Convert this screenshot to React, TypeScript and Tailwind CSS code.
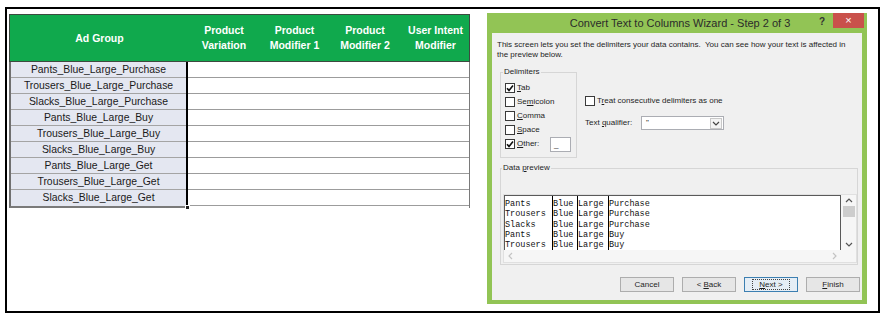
import React from 'react';

const adGroups = [
  'Pants_Blue_Large_Purchase',
  'Trousers_Blue_Large_Purchase',
  'Slacks_Blue_Large_Purchase',
  'Pants_Blue_Large_Buy',
  'Trousers_Blue_Large_Buy',
  'Slacks_Blue_Large_Buy',
  'Pants_Blue_Large_Get',
  'Trousers_Blue_Large_Get',
  'Slacks_Blue_Large_Get',
];

const headers = ['Ad Group', 'Product\nVariation', 'Product\nModifier 1', 'Product\nModifier 2', 'User Intent\nModifier'];

const preview = [
  ['Pants', 'Blue', 'Large', 'Purchase'],
  ['Trousers', 'Blue', 'Large', 'Purchase'],
  ['Slacks', 'Blue', 'Large', 'Purchase'],
  ['Pants', 'Blue', 'Large', 'Buy'],
  ['Trousers', 'Blue', 'Large', 'Buy'],
];

const Check: React.FC<{ checked?: boolean }> = ({ checked }) => (
  <span className="w-[10px] h-[10px] border border-[#3a3a3a] bg-white flex items-center justify-center shrink-0">
    {checked && (
      <svg width="8" height="8" viewBox="0 0 8 8">
        <path d="M1 4.2 L3 6.4 L7 1.4" fill="none" stroke="#111" strokeWidth="1.6" />
      </svg>
    )}
  </span>
);

const Chevron: React.FC<{ dir: 'up' | 'down' | 'left' | 'right'; color?: string }> = ({ dir, color = '#555' }) => {
  const d = {
    up: 'M1 5 L4 2 L7 5',
    down: 'M1 3 L4 6 L7 3',
    left: 'M5 1 L2 4 L5 7',
    right: 'M3 1 L6 4 L3 7',
  }[dir];
  return (
    <svg width="8" height="8" viewBox="0 0 8 8">
      <path d={d} fill="none" stroke={color} strokeWidth="1.2" />
    </svg>
  );
};

const SheetTable = () => (
  <div className="w-[461px] ml-[2px] mt-[5px] font-['Liberation_Sans',Arial,sans-serif]">
    <div className="grid grid-cols-[179px_70px_71px_70px_71px] h-[48px] bg-[#10a94d] border border-[#3d4a40] text-white font-bold text-[10.5px] leading-[15px]">
      {headers.map((h) => (
        <div key={h} className="flex items-center justify-center text-center whitespace-pre-line">
          {h}
        </div>
      ))}
    </div>
    <div className="flex">
      <div className="relative w-[179px] border-l-2 border-l-[#707070] border-r-2 border-r-black border-b-2 border-b-[#7a7a7a]">
        {adGroups.map((g, i) => (
          <div
            key={g}
            className={`h-[16px] bg-[#e4e7f1] flex items-center justify-center text-[10.4px] text-[#1a1a1a] ${i < adGroups.length - 1 ? 'border-b border-[#a4a4a4]' : ''}`}
          >
            {g}
          </div>
        ))}
        <div className="absolute -right-[4px] -bottom-[4px] w-[5px] h-[5px] bg-[#222] border border-white" />
      </div>
      <div className="flex-1 border-r border-[#7a7a7a]">
        {adGroups.map((g) => (
          <div key={g} className="h-[16px] border-b border-[#9c9c9c]" />
        ))}
      </div>
    </div>
  </div>
);

const WizardDialog = () => (
  <div className="ml-[17px] mt-[4px] w-[380px] h-[291px] bg-[#92c455] flex flex-col px-[5px] pb-[4px] font-['Liberation_Sans',Arial,sans-serif] text-[#1e1e1e]">
    <div className="relative h-[20px] shrink-0 flex items-center justify-center text-[11px] text-[#2b2b2b]">
      <span className="pl-[6px]">Convert Text to Columns Wizard - Step 2 of 3</span>
      <span className="absolute right-[37px] top-[3px] font-bold text-[10px] leading-[12px] text-[#333]">?</span>
      <div className="absolute -right-[2px] top-0 w-[31px] h-[15px] bg-[#c9514b] flex items-center justify-center text-white text-[11px] leading-none">
        ×
      </div>
    </div>
    <div className="flex-1 bg-[#f0f0f0] flex flex-col text-[8px] leading-[10px]">
      <div className="pl-[5px] pt-[7px] whitespace-nowrap">
        <div>This screen lets you set the delimiters your data contains.&nbsp; You can see how your text is affected in</div>
        <div>the preview below.</div>
      </div>

      <div className="flex mt-[7px]">
        <fieldset className="ml-[8px] w-[77px] h-[91px] border border-[#d6d6d6] pl-[4px] pr-[5px]">
          <legend className="ml-[-2px] px-[1px]">Delimiters</legend>
          <div className="pt-[4px] flex flex-col">
            <label className="h-[14px] flex items-center gap-[2px]">
              <Check checked />
              <span><u>T</u>ab</span>
            </label>
            <label className="h-[14px] flex items-center gap-[2px]">
              <Check />
              <span>Se<u>m</u>icolon</span>
            </label>
            <label className="h-[14px] flex items-center gap-[2px]">
              <Check />
              <span><u>C</u>omma</span>
            </label>
            <label className="h-[14px] flex items-center gap-[2px]">
              <Check />
              <span><u>S</u>pace</span>
            </label>
            <label className="h-[14px] flex items-center gap-[2px]">
              <Check checked />
              <span><u>O</u>ther:</span>
              <span className="ml-auto w-[21px] h-[15px] border border-[#abadb3] bg-white pl-[3px] leading-[13px]">_</span>
            </label>
          </div>
        </fieldset>

        <div className="ml-[8px] pt-[28px] flex flex-col">
          <label className="h-[12px] flex items-center gap-[2px]">
            <Check />
            <span>T<u>r</u>eat consecutive delimiters as one</span>
          </label>
          <div className="mt-[9px] flex items-center">
            <span className="w-[56px]">Text <u>q</u>ualifier:</span>
            <div className="w-[83px] h-[14px] border border-[#abadb3] bg-white flex items-center justify-between pl-[4px] pr-[1px]">
              <span className="text-[8px]">"</span>
              <span className="w-[12px] h-[11px] border border-[#c8c8c8] bg-[#f4f4f4] flex items-center justify-center">
                <Chevron dir="down" color="#444" />
              </span>
            </div>
          </div>
        </div>
      </div>

      <fieldset className="ml-[8px] mt-[5px] w-[358px] h-[102px] border border-[#d6d6d6] pl-[2px]">
        <legend className="ml-[-1px] px-[1px]">Data <u>p</u>review</legend>
        <div className="mt-[21px] w-[354px] border border-[#e0e0e0] bg-[#f6f6f6] flex flex-col">
          <div className="flex">
            <div className="w-[338px] h-[55px] bg-white border-t border-l border-r border-[#5a5a5a] flex pt-[3px] font-['Liberation_Mono','Courier_New',monospace] text-[8.5px] leading-[10.3px] text-[#111] overflow-hidden">
              {[0, 1, 2, 3].map((c) => (
                <div
                  key={c}
                  className={
                    c === 0
                      ? 'w-[47px]'
                      : c === 1
                      ? 'w-[25px] border-l border-black -mt-[3px] pt-[3px]'
                      : c === 2
                      ? 'w-[31px] border-l border-black -mt-[3px] pt-[3px]'
                      : 'flex-1 border-l border-black -mt-[3px] pt-[3px]'
                  }
                >
                  {preview.map((r, i) => (
                    <div key={i} className="whitespace-pre">{r[c]}</div>
                  ))}
                </div>
              ))}
            </div>
            <div className="w-[15px] flex flex-col items-center">
              <div className="h-[10px] flex items-center justify-center mt-[1px]">
                <Chevron dir="up" />
              </div>
              <div className="w-[12px] h-[11px] bg-[#cdcdcd]" />
              <div className="flex-1" />
              <div className="h-[10px] flex items-center justify-center mb-[1px]">
                <Chevron dir="down" />
              </div>
            </div>
          </div>
          <div className="h-[12px] flex items-center justify-between pl-[3px] pr-[18px]">
            <Chevron dir="left" color="#c4c4c4" />
            <Chevron dir="right" color="#c4c4c4" />
          </div>
        </div>
      </fieldset>

      <div className="mt-[12px] flex justify-end gap-[8px] pr-[2px] text-[8px]">
        <button className="w-[54px] h-[15px] border border-[#adadad] bg-[#e6e6e6] flex items-center justify-center">
          Cancel
        </button>
        <button className="w-[54px] h-[15px] border border-[#adadad] bg-[#e6e6e6] flex items-center justify-center">
          &lt; <u className="ml-[2px]">B</u>ack
        </button>
        <button className="w-[54px] h-[15px] border border-[#3c7fb1] bg-[#e5eef6] flex items-center justify-center">
          <span className="border border-dotted border-[#444] px-[6px] leading-[9px]">
            <u>N</u>ext &gt;
          </span>
        </button>
        <button className="w-[54px] h-[15px] border border-[#adadad] bg-[#e6e6e6] flex items-center justify-center">
          <u>F</u>inish
        </button>
      </div>
    </div>
  </div>
);

export default function App() {
  return (
    <div className="w-[887px] h-[321px] bg-white overflow-hidden">
      <div className="ml-[5px] mt-[7px] w-[875px] h-[306px] border-2 border-black flex items-start">
        <SheetTable />
        <WizardDialog />
      </div>
    </div>
  );
}
